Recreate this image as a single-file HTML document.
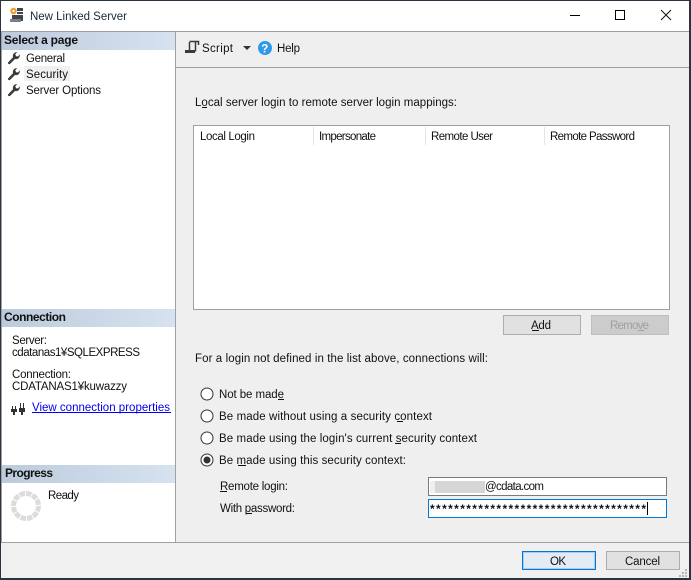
<!DOCTYPE html>
<html><head><meta charset="utf-8"><title>New Linked Server</title>
<style>
html,body{margin:0;padding:0;background:#fff;width:691px;height:580px;overflow:hidden}
svg{display:block;position:absolute;left:0;top:0}
text{font-family:"Liberation Sans","Noto Sans CJK JP",sans-serif;font-size:11.5px;fill:#111;white-space:pre}
.b{font-weight:bold}
</style></head><body>
<svg width="691" height="580" viewBox="0 0 691 580" xmlns="http://www.w3.org/2000/svg" shape-rendering="crispEdges">
<defs>
<linearGradient id="g" x1="0" x2="1" y1="0" y2="0"><stop offset="0" stop-color="#bccbdc"/><stop offset="1" stop-color="#d6e2f0"/></linearGradient>
<path id="w" d="M2 12.5 L7 7.2 C6.2 4.6 8 2 11.2 2 L9.2 4.4 L10.2 6.2 L12.2 6.4 L13.8 4.2 C14.4 7.6 11.6 9.8 9 9 L4 14 C3 14.6 1.4 13.6 2 12.5Z" fill="#3c3c3c" shape-rendering="auto"/>
</defs>
<rect width="691" height="580" fill="#fff"/>
<!-- main bg -->
<rect x="176" y="32" width="513" height="511" fill="#efefef"/>
<rect x="1" y="543" width="688" height="35" fill="#f0f0f0"/>
<!-- window border -->
<rect width="691" height="1" fill="#2b3240"/>
<rect y="0" width="1" height="580" fill="#2b3240"/>
<rect x="689" y="0" width="2" height="580" fill="#2b3240"/>
<rect y="578" width="691" height="2" fill="#2b3240"/>
<!-- lines -->
<rect x="1" y="31" width="688" height="1" fill="#a0a0a0"/>
<rect x="1" y="32" width="1" height="511" fill="#a0a0a0"/>
<rect x="175" y="32" width="1" height="511" fill="#a0a0a0"/>
<rect x="176" y="67" width="513" height="1" fill="#a0a0a0"/>
<rect x="1" y="542" width="688" height="1" fill="#a0a0a0"/>
<!-- title -->
<g>
<rect x="12" y="8" width="11" height="13" fill="#3f4650"/>
<rect x="17" y="11" width="6" height="1" fill="#fff"/><rect x="17" y="14" width="6" height="1" fill="#fff"/>
<rect x="10" y="19" width="11" height="3" fill="#7a7f86"/>
<rect x="10" y="7" width="7" height="8" fill="#fff"/>
<circle cx="13.500" cy="11" r="3.200" fill="#f09a28" shape-rendering="auto"/>
<circle cx="13.500" cy="11" r="1.100" fill="#fff" shape-rendering="auto"/>
</g>
<text x="30" y="20" textLength="97" style="fill:#1c2838">New Linked Server</text>
<rect x="570" y="15" width="10" height="1" fill="#000"/>
<rect x="615.500" y="10.500" width="9" height="9" fill="none" stroke="#000"/>
<path d="M661 10 L671 20 M671 10 L661 20" stroke="#111" stroke-width="1" fill="none" shape-rendering="auto"/>
<!-- headers -->
<rect x="2" y="32" width="173" height="18" fill="url(#g)"/>
<rect x="2" y="309" width="173" height="18" fill="url(#g)"/>
<rect x="2" y="465" width="173" height="18" fill="url(#g)"/>
<text x="4" y="44" class="b" textLength="74" style="font-size:12px">Select a page</text>
<text x="4" y="321" class="b" textLength="62" style="font-size:12px">Connection</text>
<text x="5" y="477" class="b" textLength="48" style="font-size:12px">Progress</text>
<!-- nav -->
<rect x="24" y="66" width="46" height="15" fill="#f0f0f0"/>
<use href="#w" x="6" y="50"/><use href="#w" x="6" y="66"/><use href="#w" x="6" y="82"/>
<text x="26" y="62" textLength="39">General</text>
<text x="26" y="78" textLength="42">Security</text>
<text x="26" y="94" textLength="75">Server Options</text>
<!-- connection -->
<text x="12" y="344" textLength="35">Server:</text>
<text x="12" y="356" textLength="128">cdatanas1¥SQLEXPRESS</text>
<text x="12" y="378" textLength="59">Connection:</text>
<text x="12" y="390" textLength="115">CDATANAS1¥kuwazzy</text>
<g fill="#333">
<rect x="12" y="406" width="1" height="3"/><rect x="15" y="406" width="1" height="3"/><rect x="11" y="409" width="6" height="3"/><rect x="13" y="412" width="2" height="3"/>
<rect x="20" y="403" width="1" height="5"/><rect x="23" y="403" width="1" height="5"/><rect x="19" y="408" width="6" height="4"/><rect x="21" y="412" width="2" height="3"/>
</g>
<text x="32" y="411" textLength="138" style="fill:#0000ee">View connection properties</text>
<rect x="32" y="412" width="139" height="1" fill="#0000ee"/>
<!-- progress -->
<circle cx="26" cy="506" r="12.500" fill="none" stroke="#dcdcdc" stroke-width="5" stroke-dasharray="5.5 1" shape-rendering="auto"/>
<text x="48" y="499" textLength="31">Ready</text>
<!-- toolbar -->
<path d="M189.500 41.500 H198.500 V45 M189.500 42 V51 M195.500 42 V51.500" stroke="#3a3a3a" stroke-width="1.500" fill="none" shape-rendering="auto"/>
<rect x="185" y="50" width="10" height="3" fill="#3a3a3a"/>
<text x="202" y="52" textLength="31">Script</text>
<path d="M243 46 H251 L247 50Z" fill="#333" shape-rendering="auto"/>
<circle cx="265" cy="48" r="7" fill="#2f9be8" shape-rendering="auto"/>
<text x="261.200" y="52.500" class="b" style="fill:#fff;font-size:11.5px">?</text>
<text x="277" y="52" textLength="23">Help</text>
<!-- label -->
<text x="195" y="106" textLength="262">Local server login to remote server login mappings:</text>
<rect x="202" y="107" width="5" height="1" fill="#111"/>
<!-- table -->
<rect x="193.500" y="125.500" width="476" height="184" fill="#fff" stroke="#a0a0a0"/>
<rect x="313" y="127" width="1" height="18" fill="#e5e5e5"/>
<rect x="425" y="127" width="1" height="18" fill="#e5e5e5"/>
<rect x="544" y="127" width="1" height="18" fill="#e5e5e5"/>
<text x="200" y="140" textLength="55">Local Login</text>
<text x="319" y="140" textLength="57">Impersonate</text>
<text x="431" y="140" textLength="62">Remote User</text>
<text x="550" y="140" textLength="85">Remote Password</text>
<!-- add/remove -->
<rect x="503.500" y="315.500" width="77" height="19" fill="#e1e1e1" stroke="#adadad"/>
<text x="531" y="329" textLength="20">Add</text>
<rect x="532" y="330" width="7" height="1" fill="#111"/>
<rect x="591.500" y="315.500" width="77" height="19" fill="#cccccc" stroke="#bfbfbf"/>
<text x="610" y="329" textLength="39" style="fill:#a0a0a0">Remove</text>
<rect x="638" y="330" width="6" height="1" fill="#a0a0a0"/>
<!-- radios -->
<text x="195" y="362" textLength="293">For a login not defined in the list above, connections will:</text>
<g shape-rendering="auto" fill="#fff" stroke="#333">
<circle cx="207" cy="394" r="6"/><circle cx="207" cy="416" r="6"/><circle cx="207" cy="438" r="6"/><circle cx="207" cy="460" r="6"/>
</g>
<circle cx="207" cy="460" r="3.500" fill="#333" shape-rendering="auto"/>
<text x="219" y="398" textLength="65">Not be made</text>
<rect x="278" y="399" width="6" height="1" fill="#111"/>
<text x="219" y="420" textLength="213">Be made without using a security context</text>
<rect x="397" y="421" width="6" height="1" fill="#111"/>
<text x="219" y="442" textLength="258">Be made using the login's current security context</text>
<rect x="395" y="443" width="6" height="1" fill="#111"/>
<text x="219" y="464" textLength="187">Be made using this security context:</text>
<rect x="238" y="465" width="8" height="1" fill="#111"/>
<text x="220" y="490" textLength="68">Remote login:</text>
<rect x="220" y="491" width="7" height="1" fill="#111"/>
<text x="220" y="512" textLength="75">With password:</text>
<rect x="246" y="513" width="6" height="1" fill="#111"/>
<!-- inputs -->
<rect x="428.500" y="477.500" width="238" height="18" fill="#fff" stroke="#7a7a7a"/>
<rect x="430" y="481" width="5" height="12" fill="#efefef"/>
<rect x="435" y="481" width="50" height="12" fill="#d6d6d6"/>
<text x="485" y="490" textLength="59">@cdata.com</text>
<rect x="428.500" y="499.500" width="238" height="18" fill="#fff" stroke="#0078d7"/>
<text x="430" y="513" class="b" textLength="216" style="font-size:12px">************************************</text>
<rect x="647" y="502" width="1" height="13" fill="#000"/>
<!-- footer buttons -->
<rect x="522.500" y="551.500" width="73" height="18" fill="#e3ebf5" stroke="#0078d7"/>
<rect x="523.500" y="552.500" width="71" height="16" fill="none" stroke="#a9cdf0"/>
<text x="550" y="565" textLength="16">OK</text>
<rect x="606.500" y="551.500" width="73" height="18" fill="#e1e1e1" stroke="#adadad"/>
<text x="625" y="565" textLength="35">Cancel</text>
<!-- grip -->
<g fill="#b8b8b8">
<rect x="685" y="569" width="2" height="2"/>
<rect x="682" y="572" width="2" height="2"/><rect x="685" y="572" width="2" height="2"/>
<rect x="679" y="575" width="2" height="2"/><rect x="682" y="575" width="2" height="2"/><rect x="685" y="575" width="2" height="2"/>
</g>
</svg>
</body></html>
